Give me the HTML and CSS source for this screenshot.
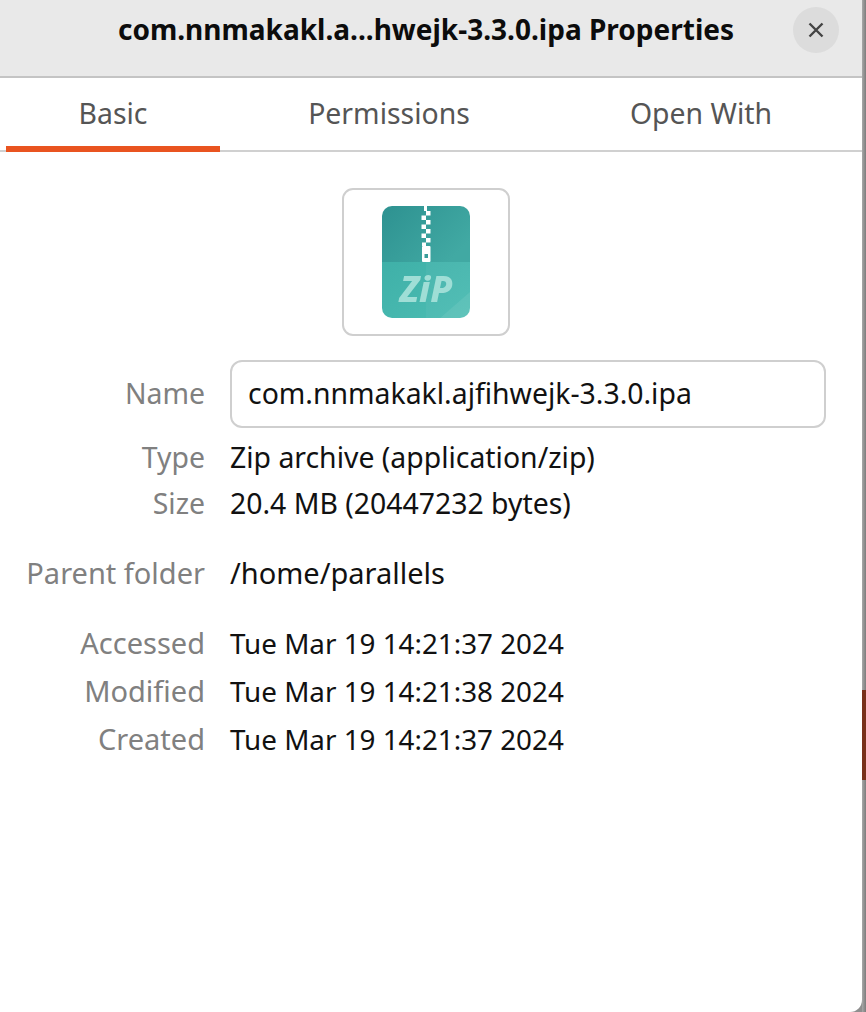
FILE: index.html
```html
<!DOCTYPE html>
<html>
    <head>
        <meta charset="utf-8" />
        <title>Properties</title>
        <link rel="stylesheet" href="styles.css">
    </head>

    <body>
        <div class="window">
            <header class="titlebar">
                <h1>com.nnmakakl.a...hwejk-3.3.0.ipa Properties</h1>
                <button class="close" type="button" aria-label="Close">
                    <svg width="18" height="18" viewBox="0 0 18 18">
                        <path d="M2.5 2.5L15.5 15.5M15.5 2.5L2.5 15.5" />
                    </svg>
                </button>
            </header>

            <nav class="tabs">
                <div class="tab active">Basic</div>
                <div class="tab">Permissions</div>
                <div class="tab">Open With</div>
            </nav>

            <main class="content">
                <div class="icon-frame">
                    <svg class="zip-icon" width="90" height="114" viewBox="0 0 90 114">
                        <defs>
                            <clipPath id="body-clip">
                                <rect x="1" y="1" width="88" height="112" rx="10" />
                            </clipPath>
                            <linearGradient id="top-fill" x1="0" y1="0" x2="1" y2="0.6">
                                <stop offset="0" stop-color="#2d9190" />
                                <stop offset="1" stop-color="#41a9a3" />
                            </linearGradient>
                            <linearGradient id="bottom-fill" x1="0" y1="0" x2="1" y2="1">
                                <stop offset="0" stop-color="#3fb0a8" />
                                <stop offset="1" stop-color="#4cbdb3" />
                            </linearGradient>
                        </defs>
                        <g clip-path="url(#body-clip)">
                            <rect width="90" height="57" fill="url(#top-fill)" />
                            <rect y="57" width="90" height="57" fill="url(#bottom-fill)" />
                            <path d="M45 57H90V114H45Z" fill="#fff" opacity="0.04" />
                            <path d="M90 86V114H58Z" fill="#fff" opacity="0.08" />
                            <path d="M43 1h3v5h-3zM45 6h4.5v4.5h-4.5zM40.5 10.5h4.5v4.5h-4.5zM45 15h4.5v4.5h-4.5zM40.5 19.5h4.5v4.5h-4.5zM45 24h4.5v4.5h-4.5zM40.5 28.5h4.5v4.5h-4.5zM45 33h4.5v4.5h-4.5zM41 37.5h4v3.5h-4z" fill="#fff" />
                            <rect x="41" y="41" width="8.5" height="16" rx="1" fill="#fff" />
                            <rect x="43.5" y="49" width="3.5" height="4" fill="#3a9d9a" />
                        </g>
                        <text class="zip-label" x="45" y="97" text-anchor="middle">ZiP</text>
                    </svg>
                </div>

                <div class="details">
                    <div class="label name-row">Name</div>
                    <div class="name-field">com.nnmakakl.ajfihwejk-3.3.0.ipa</div>

                    <div class="label">Type</div>
                    <div class="value">Zip archive (application/zip)</div>
                    <div class="label">Size</div>
                    <div class="value">20.4 MB (20447232 bytes)</div>

                    <div class="label gap-before">Parent folder</div>
                    <div class="value gap-before">/home/parallels</div>

                    <div class="label date first-date">Accessed</div>
                    <div class="value date first-date">Tue Mar 19 14:21:37 2024</div>
                    <div class="label date">Modified</div>
                    <div class="value date">Tue Mar 19 14:21:38 2024</div>
                    <div class="label date">Created</div>
                    <div class="value date">Tue Mar 19 14:21:37 2024</div>
                </div>
            </main>
        </div>

        <div class="edge">
            <div class="edge-accent"></div>
        </div>
    </body>
</html>
```

FILE: styles.css
```css
html,
body {
    margin: 0;
    padding: 0;
    height: 1012px;
    overflow: hidden;
}

body {
    display: flex;
    background: #8f8f8f;
    color: #111;
    font-family: 'Noto Sans', sans-serif;
    font-size: 28.4px;
}

.window {
    width: 862px;
    height: 1012px;
    background: #fff;
    flex: none;
    border-bottom-right-radius: 12px;
    overflow: hidden;
}

.titlebar {
    display: flex;
    align-items: center;
    justify-content: center;
    height: 76px;
    background: #e9e9e9;
    border-bottom: 2px solid #c4c4c4;
    position: relative;
}

.titlebar h1 {
    margin: -18px 0 0 -10px;
    font-size: 28px;
    font-weight: 700;
    color: #0c0c0c;
}

.close {
    position: absolute;
    top: 7px;
    right: 23px;
    width: 46px;
    height: 46px;
    border: 0;
    padding: 0;
    border-radius: 50%;
    background: #dcdcdc;
    display: flex;
    align-items: center;
    justify-content: center;
}

.close path {
    fill: none;
    stroke: #444;
    stroke-width: 2.4;
}

.tabs {
    display: grid;
    grid-template-columns: 214px 338px 286px;
    padding-left: 6px;
    height: 72px;
    border-bottom: 2px solid #d0d0d0;
    color: #555;
}

.tab {
    display: flex;
    align-items: center;
    justify-content: center;
    box-sizing: border-box;
    height: 72px;
    padding-bottom: 2px;
    position: relative;
}

.tab.active::after {
    content: '';
    position: absolute;
    left: 0;
    right: 0;
    bottom: -2px;
    height: 6px;
    background: #e95420;
}

.content {
    padding-top: 36px;
}

.icon-frame {
    box-sizing: border-box;
    width: 168px;
    height: 148px;
    margin-left: 342px;
    border: 2px solid #cfcfcf;
    border-radius: 11px;
    display: flex;
    align-items: center;
    justify-content: center;
}

.zip-icon {
    filter: blur(0.4px);
}

.zip-label {
    font-family: 'Noto Sans', sans-serif;
    font-size: 36px;
    font-weight: 800;
    font-style: italic;
    fill: #9fded6;
}

.details {
    display: grid;
    grid-template-columns: 205px 596px;
    column-gap: 25px;
    margin-top: 24px;
    line-height: 44px;
}

.label,
.value {
    padding-bottom: 2px;
}

.label {
    text-align: right;
    color: #808080;
}

.label.name-row {
    line-height: 66px;
}

.name-field {
    box-sizing: border-box;
    height: 68px;
    line-height: 63px;
    padding-left: 16px;
    border: 2px solid #cfcfcf;
    border-radius: 12px;
    margin-bottom: 7px;
}

.gap-before {
    margin-top: 24px;
    font-size: 29px;
}

.date {
    line-height: 46px;
    font-size: 27.8px;
}

.label.date {
    font-size: 29px;
}

.first-date {
    margin-top: 23px;
}

.edge {
    flex: 1;
    height: 1012px;
    background: linear-gradient(to right, #a8a8a8, #7c7c7c);
    padding-top: 690px;
    box-sizing: border-box;
}

.edge-accent {
    height: 90px;
    background: #78301a;
}
```
